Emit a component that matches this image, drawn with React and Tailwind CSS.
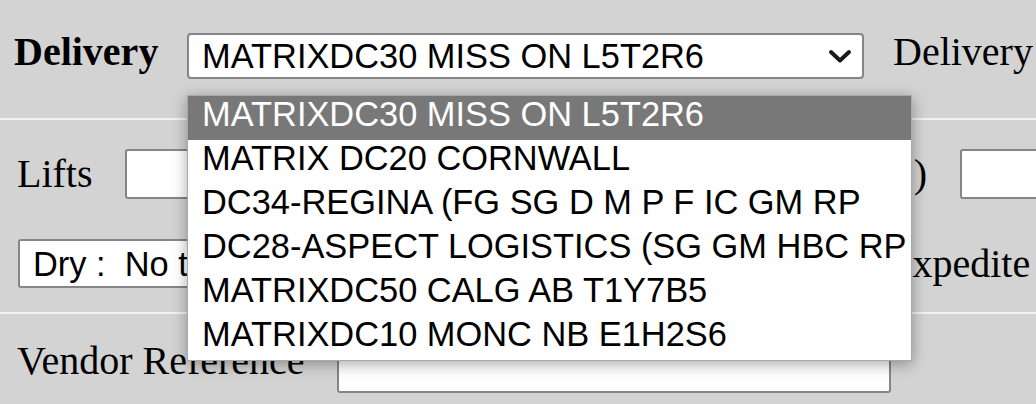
const serif = { fontFamily: '"Liberation Serif", "Times New Roman", serif' };
const sans = { fontFamily: '"Liberation Sans", Arial, sans-serif' };

const depots = [
  'MATRIXDC30 MISS ON L5T2R6',
  'MATRIX DC20 CORNWALL',
  'DC34-REGINA (FG SG D M P F IC GM RP',
  'DC28-ASPECT LOGISTICS (SG GM HBC RP',
  'MATRIXDC50 CALG AB T1Y7B5',
  'MATRIXDC10 MONC NB E1H2S6',
];

function Chevron() {
  return (
    <svg width="24" height="15" viewBox="0 0 24 15" className="shrink-0">
      <polyline points="3,3 12,11.5 21,3" fill="none" stroke="#1a1a1a" strokeWidth="4" strokeLinecap="round" strokeLinejoin="round" />
    </svg>
  );
}

function Field({ className }) {
  return <div className={`shrink-0 bg-white border-2 border-[#858585] rounded-[3px] ${className}`} />;
}

export default function App() {
  return (
    <div className="relative w-[1036px] h-[404px] overflow-hidden bg-[#d3d3d3] text-black" style={serif}>
      {/* Delivery row */}
      <div className="flex items-start h-[118px] pl-[14px] whitespace-nowrap">
        <div className="w-[173px] shrink-0 mt-[32px] text-[40px] leading-[40px] font-bold">Delivery</div>
        <div
          className="shrink-0 w-[677px] h-[46px] mt-[33px] flex items-center justify-between pl-[13px] pr-[10px] bg-white border-2 border-[#858585] rounded-[4px] text-[34.4px] leading-[38px]"
          style={sans}
        >
          <span>MATRIXDC30 MISS ON L5T2R6</span>
          <Chevron />
        </div>
        <div className="shrink-0 ml-[29px] mt-[32px] text-[40px] leading-[40px]">Delivery Date</div>
      </div>
      <div className="h-[2px] bg-[#f2f2f2]" />

      {/* Lifts / type row */}
      <div className="h-[192px] pt-[29px] whitespace-nowrap">
        <div className="flex items-center h-[50px] pl-[17px]">
          <div className="w-[108px] shrink-0 text-[40px] leading-[40px]">Lifts</div>
          <Field className="w-[340px] h-[50px]" />
          <div className="w-[462px] shrink-0 text-right text-[40px] leading-[40px]">)</div>
          <Field className="ml-[33px] w-[140px] h-[50px]" />
        </div>
        <div className="flex items-center h-[49px] mt-[40px] pl-[18px]">
          <div
            className="shrink-0 w-[500px] h-[49px] flex items-center pl-[13px] bg-white border-2 border-[#858585] rounded-[3px] text-[34.4px] leading-[38px]"
            style={sans}
          >
            Dry :&nbsp; No tarp
          </div>
          <div className="shrink-0 ml-[370px] text-[40px] leading-[40px]">Expedite</div>
        </div>
      </div>
      <div className="h-[2px] bg-[#f2f2f2]" />

      {/* Vendor reference row */}
      <div className="flex items-start pt-[29px] pl-[17px] whitespace-nowrap">
        <div className="w-[320px] shrink-0 -mt-[2px] text-[40px] leading-[40px]">Vendor Reference</div>
        <Field className="w-[554px] h-[50px]" />
      </div>

      {/* open select list */}
      <div
        className="absolute left-[187px] top-[95px] w-[725px] bg-white border border-[#a9a9a9] shadow-[0_3px_14px_rgba(0,0,0,0.35)] text-[34.4px] leading-[36px] whitespace-nowrap"
        style={sans}
      >
        {depots.map((d, i) => (
          <div key={d} className={`h-[44px] pl-[14px] ${i === 0 ? 'bg-[#787878] text-white' : 'text-black'}`}>
            {d}
          </div>
        ))}
      </div>
    </div>
  );
}
